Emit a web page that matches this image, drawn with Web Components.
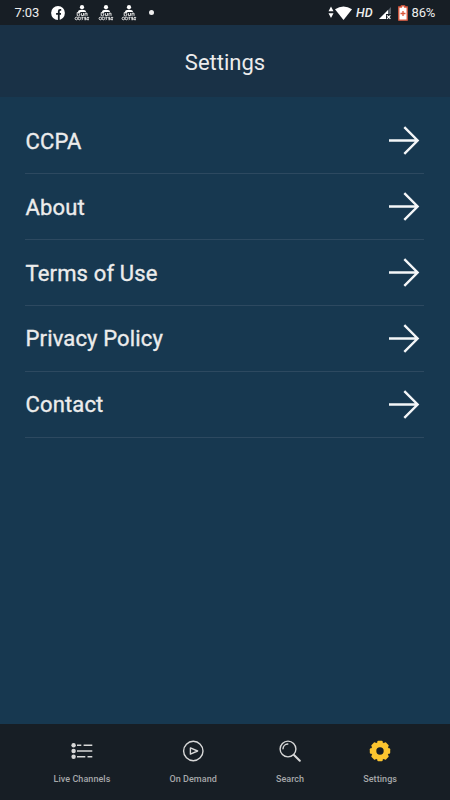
<!DOCTYPE html>
<html lang="en">
<head>
<meta charset="utf-8">
<meta name="viewport" content="width=device-width, initial-scale=1">
<title>Settings</title>
<style>
  html, body { height: 100%; margin: 0; }
  body { background: #173850; font-family: Roboto, "Noto Sans", sans-serif; color: #ececec; overflow: hidden; }
</style>
</head>
<body>
<settings-app></settings-app>

<script>
const icons = {
  channels: `<svg width="22" height="18" viewBox="0 0 22 18" fill="none" stroke="currentColor" stroke-width="1.4">
    <g fill="currentColor" stroke="none"><circle cx="2.6" cy="3.3" r="2.2"/><circle cx="2.6" cy="9" r="2.2"/><circle cx="2.6" cy="14.8" r="2.2"/></g>
    <path d="M6 3.3H10.3M12.6 3.3H21.3M6 9H21.3M6 14.8H14.3M16.5 14.8H21.3"/></svg>`,
  play: `<svg width="22" height="22" viewBox="0 0 22 22" fill="none" stroke="currentColor" stroke-width="1.4" stroke-linejoin="round">
    <circle cx="11.3" cy="11" r="9.7"/><path d="M8.4 7.9L15.6 11L8.4 14.1Z"/></svg>`,
  search: `<svg width="22" height="22" viewBox="0 0 22 22" fill="none" stroke="currentColor" stroke-width="1.4" stroke-linecap="round">
    <circle cx="9" cy="9" r="7.9"/><path d="M4 8.8A5 5 0 0 1 8.8 4"/><path d="M15 15L20.8 20.8" stroke-width="2"/></svg>`,
  gear: `<svg width="22" height="22" viewBox="0 0 22 22">
    <circle cx="11" cy="11" r="6.3" fill="none" stroke="currentColor" stroke-width="5.2"/>
    <g fill="currentColor">${[0, 45, 90, 135, 180, 225, 270, 315].map(a =>
      `<rect x="8.3" y=".8" width="5.4" height="3.5" rx="1" transform="rotate(${a} 11 11)"/>`).join('')}</g></svg>`
};

class StatusBar extends HTMLElement {
  constructor() {
    super();
    this.attachShadow({ mode: 'open' });
    const contact = `
      <span class="contact">
        <svg width="16" height="7" viewBox="0 0 16 7" fill="#fff"><circle cx="8" cy="2.2" r="2.1"/><path d="M4 7Q4 4.8 8 4.8T12 7Z"/></svg>
        <svg width="16" height="9" viewBox="0 0 16 9" fill="none" stroke="#e6e6e6" stroke-width="1">
          <path d="M3.2 .5H6L4.8 1.8Q6.5 2.1 5.7 3.3T3.2 3.6V.5M7.4 1.2V3.6H9.6V1M11 3.9V1.2H13V3.9"/>
          <circle cx="2.4" cy="6.5" r="1.3"/><circle cx="5.4" cy="6.5" r="1.3"/>
          <path d="M7.4 5.3H9.2L8.2 6.3Q9.8 7 7.7 7.8M12.2 5.3H10.6V6.4H12.2V7.7H10.4M13 5.4H14.8L13.2 7.7H15"/>
        </svg>
      </span>`;
    this.shadowRoot.innerHTML = `
      <style>
        :host {
          display: flex;
          align-items: center;
          justify-content: space-between;
          box-sizing: border-box;
          height: 25px;
          padding: 0 15px 0 14.5px;
          background: #171e25;
          color: #eee;
          font-size: 13px;
        }
        div { display: flex; align-items: center; height: 26px; }
        svg { display: block; flex: none; }
        .time { width: 36.5px; letter-spacing: -.1px; }
        .fb { margin-right: 9px; }
        .contact { width: 16px; height: 15px; margin-right: 7.5px; }
        .dot { width: 5px; height: 5px; margin-left: 4px; border-radius: 50%; background: #eee; }
        .updown { margin-right: 1px; }
        .hd { font-size: 12.5px; font-weight: 500; font-style: italic; margin: 0 5px 0 4px; }
        .signal { margin-right: 6px; }
        .battery { margin-right: 4px; }
        .level { letter-spacing: -.25px; }
      </style>
      <div>
        <span class="time">7:03</span>
        <svg class="fb" width="14" height="14" viewBox="0 0 14 14">
          <circle cx="7" cy="7" r="6.9" fill="#fff"/>
          <path d="M10.2 3.9H9.2Q7.8 3.9 7.8 5.3V14M5.1 7.8H10" fill="none" stroke="#171e25" stroke-width="1.8"/>
        </svg>
        ${contact}${contact}${contact}
        <span class="dot"></span>
      </div>
      <div>
        <svg class="updown" width="6" height="13" viewBox="0 0 6 13" fill="#fff"><path d="M3 .5L5.5 5.3H.5ZM3 12L.5 7.2H5.5Z"/></svg>
        <svg width="17" height="14" viewBox="0 0 17 14" fill="#fff"><path d="M0 3.3Q8.5-2.4 17 3.3L8.5 14Z"/></svg>
        <span class="hd">HD</span>
        <svg class="signal" width="14" height="14" viewBox="0 0 14 14">
          <path d="M13 1V8H8V13H1Z" fill="#59616a"/>
          <path d="M10 4V8H8V13H1Z" fill="#fff"/>
          <path d="M9 9.4L12.4 12.8M12.4 9.4L9 12.8" stroke="#fff" stroke-width="1.2"/>
        </svg>
        <svg class="battery" width="10" height="16" viewBox="0 0 10 16">
          <path d="M3.4 2V.8H6.6V2H9.2V15.2H.8V2Z" fill="#fff" stroke="#dc563b" stroke-width="1.3"/>
          <path d="M5 6V11M2.5 8.5H7.5" stroke="#dc563b" stroke-width="1.3"/>
        </svg>
        <span class="level">86%</span>
      </div>
    `;
  }
}

class TitleBar extends HTMLElement {
  constructor() {
    super();
    this.attachShadow({ mode: 'open' });
    this.shadowRoot.innerHTML = `
      <style>
        :host {
          display: flex;
          align-items: center;
          justify-content: center;
          height: 72px;
          padding-top: 2px;
          box-sizing: border-box;
          background: #193146;
          font-size: 22px;
        }
      </style>
      <slot></slot>
    `;
  }
}

class SettingsItem extends HTMLElement {
  constructor() {
    super();
    this.attachShadow({ mode: 'open' });
    this.shadowRoot.innerHTML = `
      <style>
        :host {
          display: flex;
          align-items: center;
          justify-content: space-between;
          box-sizing: border-box;
          height: 65.8px;
          padding: 1px 4px 0 .5px;
          border-bottom: 1px solid #2d4960;
          font-size: 22px;
          letter-spacing: .15px;
          -webkit-text-stroke: .35px currentColor;
          cursor: pointer;
        }
        svg { display: block; }
      </style>
      <slot></slot>
      <svg width="32" height="30" viewBox="0 0 32 30" fill="none" stroke="#f4f6f8" stroke-width="2.4">
        <path d="M1 14.5H30M16.3 1.2L29.6 14.5L16.3 27.8"/>
      </svg>
    `;
  }
}

class NavTab extends HTMLElement {
  constructor() {
    super();
    this.attachShadow({ mode: 'open' });
    this.shadowRoot.innerHTML = `
      <style>
        :host {
          display: flex;
          flex-direction: column;
          align-items: center;
          gap: 11px;
          color: #d8d8d8;
          cursor: pointer;
        }
        .icon { display: flex; align-items: center; height: 22px; }
        :host([active]) .icon { color: #fcc52f; }
        .label { font-size: 9px; font-weight: 500; line-height: 12px; letter-spacing: .06px; color: #a6a8aa; white-space: nowrap; }
      </style>
      <span class="icon">${icons[this.getAttribute('icon')] || ''}</span>
      <span class="label"><slot></slot></span>
    `;
  }
}

class NavBar extends HTMLElement {
  constructor() {
    super();
    this.attachShadow({ mode: 'open' });
    this.shadowRoot.innerHTML = `
      <style>
        :host {
          display: flex;
          justify-content: space-between;
          box-sizing: border-box;
          height: 76.5px;
          padding: 16.8px 53px 0 53.5px;
          background: #171e25;
        }
      </style>
      <slot></slot>
    `;
  }
}

class SettingsApp extends HTMLElement {
  constructor() {
    super();
    this.attachShadow({ mode: 'open' });
    this.shadowRoot.innerHTML = `
      <style>
        :host { display: flex; flex-direction: column; height: 100vh; }
        main { flex: 1; padding: 11.6px 26px 0 25px; }
      </style>
      <status-bar></status-bar>
      <title-bar>Settings</title-bar>
      <main>
        <settings-item>CCPA</settings-item>
        <settings-item>About</settings-item>
        <settings-item>Terms of Use</settings-item>
        <settings-item>Privacy Policy</settings-item>
        <settings-item>Contact</settings-item>
      </main>
      <nav-bar>
        <nav-tab icon="channels">Live Channels</nav-tab>
        <nav-tab icon="play">On Demand</nav-tab>
        <nav-tab icon="search">Search</nav-tab>
        <nav-tab icon="gear" active>Settings</nav-tab>
      </nav-bar>
    `;
  }
}

customElements.define('status-bar', StatusBar);
customElements.define('title-bar', TitleBar);
customElements.define('settings-item', SettingsItem);
customElements.define('nav-tab', NavTab);
customElements.define('nav-bar', NavBar);
customElements.define('settings-app', SettingsApp);
</script>
</body>
</html>
